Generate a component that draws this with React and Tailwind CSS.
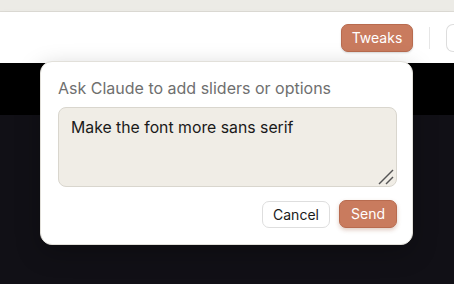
import React from 'react';

const font = { fontFamily: 'Inter, "Noto Sans", sans-serif' };

export default function App() {
  return (
    <div className="relative w-[454px] h-[284px] overflow-hidden bg-[#111016]" style={font}>
      {/* browser chrome strip */}
      <div className="h-[12px] bg-[#ecebe6] border-b border-[#dddbd5]" />

      {/* app header */}
      <div className="h-[51px] bg-white flex items-center justify-end gap-[16px] pl-4 shadow-[0_2px_6px_rgba(0,0,0,0.06)]">
        <button className="h-[28px] w-[72px] rounded-[7px] bg-[#c97b5e] border border-[#b86b4f] text-white text-[14px] leading-none shadow-[0_1px_2px_rgba(0,0,0,0.15)]">
          Tweaks
        </button>
        <div className="w-px h-[22px] bg-[#e6e6e6]" />
        <div className="w-[8px] h-[28px] rounded-l-[7px] border border-r-0 border-[#dddddd]" />
      </div>

      {/* black band */}
      <div className="h-[52px] bg-black" />

      {/* popover */}
      <div className="absolute left-[40px] top-[61px] w-[373px] h-[184px] bg-white rounded-[12px] border border-[#e2e0da] shadow-[0_8px_24px_rgba(0,0,0,0.25)] pl-[17px] pr-[15px] pt-[16px]">
        <div className="text-[16px] leading-[20px] text-[#6f6f6f]">
          Ask Claude to add sliders or options
        </div>
        <div className="relative mt-[9px]">
          <textarea
            defaultValue="Make the font more sans serif"
            className="block w-[339px] h-[80px] resize-none rounded-[8px] bg-[#f0ede6] border border-[#d9d6ce] px-[12px] py-[10px] text-[15.8px] leading-[20px] text-[#1a1a1a] outline-none"
            style={font}
          />
          <svg className="absolute right-[3px] bottom-[2px]" width="16" height="16" viewBox="0 0 16 16">
            <line x1="1" y1="15" x2="15" y2="1" stroke="#555" strokeWidth="1.4" />
            <line x1="8" y1="15" x2="15" y2="8" stroke="#555" strokeWidth="1.4" />
          </svg>
        </div>
        <div className="flex justify-end gap-[9px] mt-[14px]">
          <button className="h-[27px] w-[68px] rounded-[7px] bg-white border border-[#dedede] text-[14px] text-[#1a1a1a] leading-none">
            Cancel
          </button>
          <button className="h-[28px] w-[58px] -mt-px rounded-[7px] bg-[#c97b5e] border border-[#b86b4f] text-[14px] text-white leading-none shadow-[0_2px_4px_rgba(150,80,50,0.3)]">
            Send
          </button>
        </div>
      </div>
    </div>
  );
}
